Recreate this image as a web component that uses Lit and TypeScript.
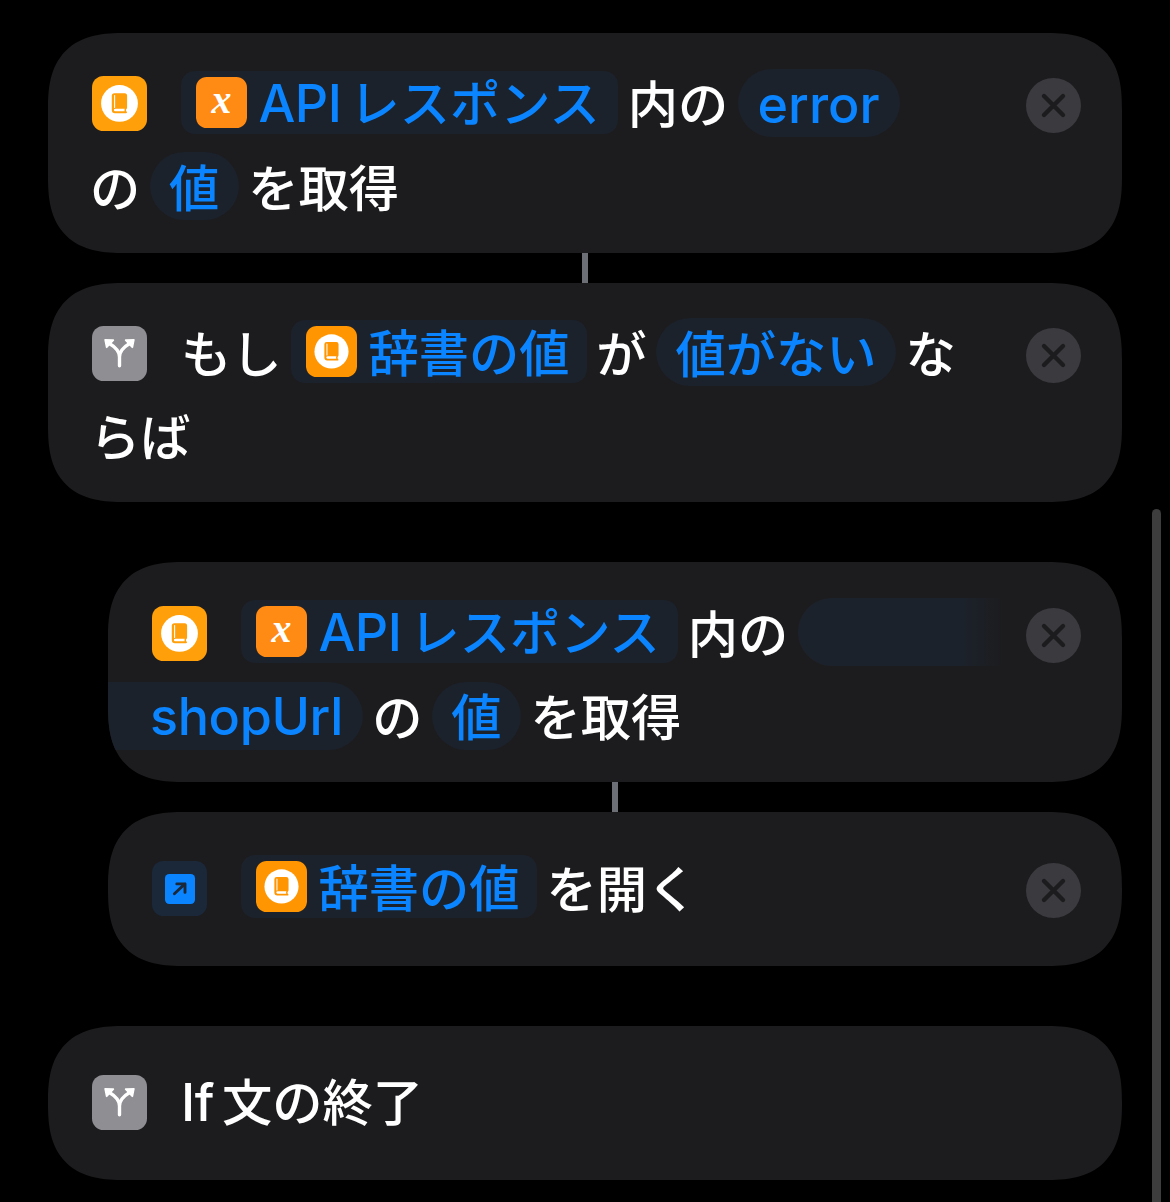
import { LitElement, html, css, svg, nothing } from "lit";
import { customElement, property } from "lit/decorators.js";

type IconName = "book" | "variable" | "branch" | "open";

type Token =
    | { kind: "icon"; icon: IconName }
    | { kind: "text"; text: string; latin?: string }
    | { kind: "chip"; icon: IconName; text: string; latin?: string }
    | { kind: "pill"; text: string; latin?: boolean; part?: "start" | "end" };

interface Action {
    lines: Token[][];
    nested?: boolean;
    linked?: boolean;
    removable?: boolean;
}

const ACTIONS: Action[] = [
    {
        linked: true,
        removable: true,
        lines: [
            [
                { kind: "icon", icon: "book" },
                { kind: "chip", icon: "variable", latin: "API", text: "レスポンス" },
                { kind: "text", text: "内の" },
                { kind: "pill", text: "error", latin: true },
            ],
            [
                { kind: "text", text: "の" },
                { kind: "pill", text: "値" },
                { kind: "text", text: "を取得" },
            ],
        ],
    },
    {
        removable: true,
        lines: [
            [
                { kind: "icon", icon: "branch" },
                { kind: "text", text: "もし" },
                { kind: "chip", icon: "book", text: "辞書の値" },
                { kind: "text", text: "が" },
                { kind: "pill", text: "値がない" },
                { kind: "text", text: "な" },
            ],
            [{ kind: "text", text: "らば" }],
        ],
    },
    {
        nested: true,
        linked: true,
        removable: true,
        lines: [
            [
                { kind: "icon", icon: "book" },
                { kind: "chip", icon: "variable", latin: "API", text: "レスポンス" },
                { kind: "text", text: "内の" },
                { kind: "pill", text: "", part: "start" },
            ],
            [
                { kind: "pill", text: "shopUrl", latin: true, part: "end" },
                { kind: "text", text: "の" },
                { kind: "pill", text: "値" },
                { kind: "text", text: "を取得" },
            ],
        ],
    },
    {
        nested: true,
        removable: true,
        lines: [
            [
                { kind: "icon", icon: "open" },
                { kind: "chip", icon: "book", text: "辞書の値" },
                { kind: "text", text: "を開く" },
            ],
        ],
    },
    {
        lines: [
            [
                { kind: "icon", icon: "branch" },
                { kind: "text", latin: "If", text: "文の終了" },
            ],
        ],
    },
];

@customElement("action-icon")
export class ActionIcon extends LitElement {
    @property() name: IconName = "book";

    static styles = css`
        :host {
            display: block;
            flex: none;
            width: 55px;
            height: 55px;
        }

        svg {
            display: block;
            width: 100%;
            height: 100%;
        }

        .book {
            fill: var(--book-color, #ff9f0a);
        }

        .variable {
            fill: #ff8a14;
        }

        .branch {
            fill: #8e8e93;
        }

        .open {
            fill: #1a283a;
        }

        .letter {
            font: italic bold 43px "Liberation Serif", serif;
            fill: #fff;
            text-anchor: middle;
        }
    `;

    _glyph() {
        switch (this.name) {
            case "book":
                return svg`
                    <circle cx="27.5" cy="27.4" r="18.4" fill="#fff" />
                    <path class="book" fill-rule="evenodd" d="M22.4 17.2H32.6Q35.1 17.2 35.1 19.7V31.6Q35.1 32.6 34.2 33.2Q33.7 34.2 34.2 35.3Q35 35.6 35 36.3Q35 37.2 34 37.2H23Q19.8 37.2 19.8 34V19.8Q19.8 17.2 22.4 17.2Z" />
                    <path d="M22.6 19.5V31.4" stroke="#fff" stroke-width="1.1" stroke-linecap="round" fill="none" />
                    <path d="M23.2 32.7H32.8Q32.1 34 32.7 35.2H23.2Q21.9 35.2 21.9 34Q21.9 32.7 23.2 32.7Z" fill="#fff" />`;
            case "variable":
                return svg`<text class="letter" x="27.6" y="39.2">x</text>`;
            case "branch":
                return svg`
                    <path d="M17 17.3Q27.5 23.5 27.5 31Q27.5 23.5 38 17.3M27.5 28V39.8" fill="none" stroke="#fff" stroke-width="3.4" stroke-linecap="round" />
                    <path d="M13.2 13.9L21.3 14.2L14.7 21.2ZM41.8 13.9L33.7 14.2L40.3 21.2Z" fill="#fff" stroke="#fff" stroke-width="1.8" stroke-linejoin="round" />`;
            case "open":
                return svg`
                    <rect x="13" y="13" width="30" height="30" rx="4.2" fill="#0a84ff" />
                    <path d="M22.4 32.8L33 22.8M24.8 22.9H33V31.4" fill="none" stroke="#1a283a" stroke-width="2.9" stroke-linecap="round" stroke-linejoin="round" />`;
        }
    }

    render() {
        return html`
            <svg viewBox="0 0 55 55">
                <rect class=${this.name} width="55" height="55" rx="11.5" />
                ${this._glyph()}
            </svg>
        `;
    }
}

@customElement("action-card")
export class ActionCard extends LitElement {
    @property({ attribute: false }) action!: Action;

    static styles = css`
        :host {
            display: block;
        }

        .card {
            box-sizing: border-box;
            display: flex;
            justify-content: space-between;
            height: var(--card-height, 220px);
            padding: var(--card-top, 35.5px) 41px 0 44px;
            border-radius: 64px;
            background: #1c1c1e;
            overflow: hidden;
        }

        .single {
            height: 154px;
            padding-top: 41px;
        }

        @supports (corner-shape: superellipse(1.4)) {
            .card {
                border-radius: 77px;
                corner-shape: superellipse(1.4);
            }
        }

        .lines {
            display: flex;
            flex-direction: column;
            gap: 15.5px;
        }

        .line {
            display: flex;
            align-items: center;
            height: 68px;
            gap: 9.3px;
            white-space: nowrap;
            color: #fff;
            font: 500 50.3px/68px "Noto Sans CJK JP", sans-serif;
        }

        .line:nth-child(2) {
            margin-left: -2px;
        }

        .lead {
            margin: 2px 24.7px 0 0;
        }

        .text {
            padding-bottom: 3px;
        }

        .mixed {
            padding-bottom: 1px;
        }

        .word {
            margin-right: 8px;
            font: 500 52px Inter, sans-serif;
            line-height: inherit;
            letter-spacing: -0.5px;
        }

        .chip,
        .pill {
            box-sizing: border-box;
            display: flex;
            align-items: center;
            background: #1c222b;
            color: #0a84ff;
        }

        .chip {
            height: 63px;
            margin-bottom: 1px;
            padding: 0 17.5px 0 15px;
            border-radius: 14px;
            --book-color: #ff9500;
        }

        .chip .mixed {
            padding-right: 1px;
        }

        .chip action-icon {
            width: 51px;
            height: 51px;
            margin-right: 11.5px;
        }

        .pill {
            height: 68px;
            padding: 0 19.5px 3px;
            border-radius: 34px;
        }

        .latin {
            padding: 4px 20px 0;
            font-family: Inter, sans-serif;
            font-size: 52px;
        }

        .start {
            width: 205px;
            border-radius: 34px 0 0 34px;
            background: linear-gradient(90deg, #1c222b 80%, #1c1c1e);
        }

        .end {
            margin-left: -42px;
            padding: 2px 20px 0 42px;
            border-radius: 0 34px 34px 0;
            letter-spacing: -0.35px;
        }

        .close {
            flex: none;
            width: 55px;
            height: 55px;
            margin-top: 9.5px;
        }

        .single .close {
            margin-top: 10px;
        }
    `;

    _token(token: Token) {
        switch (token.kind) {
            case "icon":
                return html`<action-icon class="lead" name=${token.icon}></action-icon>`;
            case "text":
                return this._text(token.text, token.latin);
            case "chip":
                return html`
                    <span class="chip">
                        <action-icon name=${token.icon}></action-icon>
                        ${this._text(token.text, token.latin)}
                    </span>
                `;
            case "pill":
                return html`
                    <span class="pill ${token.latin ? "latin" : ""} ${token.part ?? ""}">${token.text}</span>
                `;
        }
    }

    _text(text: string, latin?: string) {
        return latin
            ? html`<span class="text mixed"><span class="word">${latin}</span>${text}</span>`
            : html`<span class="text">${text}</span>`;
    }

    render() {
        const { lines, removable } = this.action;

        return html`
            <div class="card ${lines.length === 1 ? "single" : ""}">
                <div class="lines">
                    ${lines.map((line) => html`<div class="line">${line.map((token) => this._token(token))}</div>`)}
                </div>
                ${removable
                    ? html`
                          <svg class="close" viewBox="0 0 55 55">
                              <circle cx="27.5" cy="27.5" r="27.5" fill="#3b3a3f" />
                              <path d="M18 18L37 37M37 18L18 37" stroke="#1c1c1e" stroke-width="4.4" stroke-linecap="round" />
                          </svg>
                      `
                    : nothing}
            </div>
        `;
    }
}

@customElement("app-root")
export class AppRoot extends LitElement {
    static styles = css`
        :host {
            display: block;
            position: relative;
            box-sizing: border-box;
            width: 1170px;
            height: 1202px;
            padding: 33px 48px 0;
            background: #000;
            overflow: hidden;
        }

        .list {
            display: flex;
            flex-direction: column;
        }

        .item {
            margin-bottom: 60px;
        }

        .item:nth-child(2) {
            --card-height: 219px;
            --card-top: 35px;
        }

        .item:nth-child(3) {
            --card-top: 36px;
        }

        .nested {
            margin-left: 60px;
        }

        .linked {
            margin-bottom: 0;
        }

        .link {
            width: 6px;
            height: 30px;
            margin: 0 auto;
            background: #6d6f76;
        }

        .scrollbar {
            position: absolute;
            top: 509px;
            right: 9px;
            bottom: -10px;
            width: 9px;
            border-radius: 5px;
            background: #3d3d3d;
        }
    `;

    render() {
        return html`
            <div class="list">
                ${ACTIONS.map(
                    (action) => html`
                        <div class="item ${action.nested ? "nested" : ""} ${action.linked ? "linked" : ""}">
                            <action-card .action=${action}></action-card>
                            ${action.linked ? html`<div class="link"></div>` : nothing}
                        </div>
                    `
                )}
            </div>
            <div class="scrollbar"></div>
        `;
    }
}
